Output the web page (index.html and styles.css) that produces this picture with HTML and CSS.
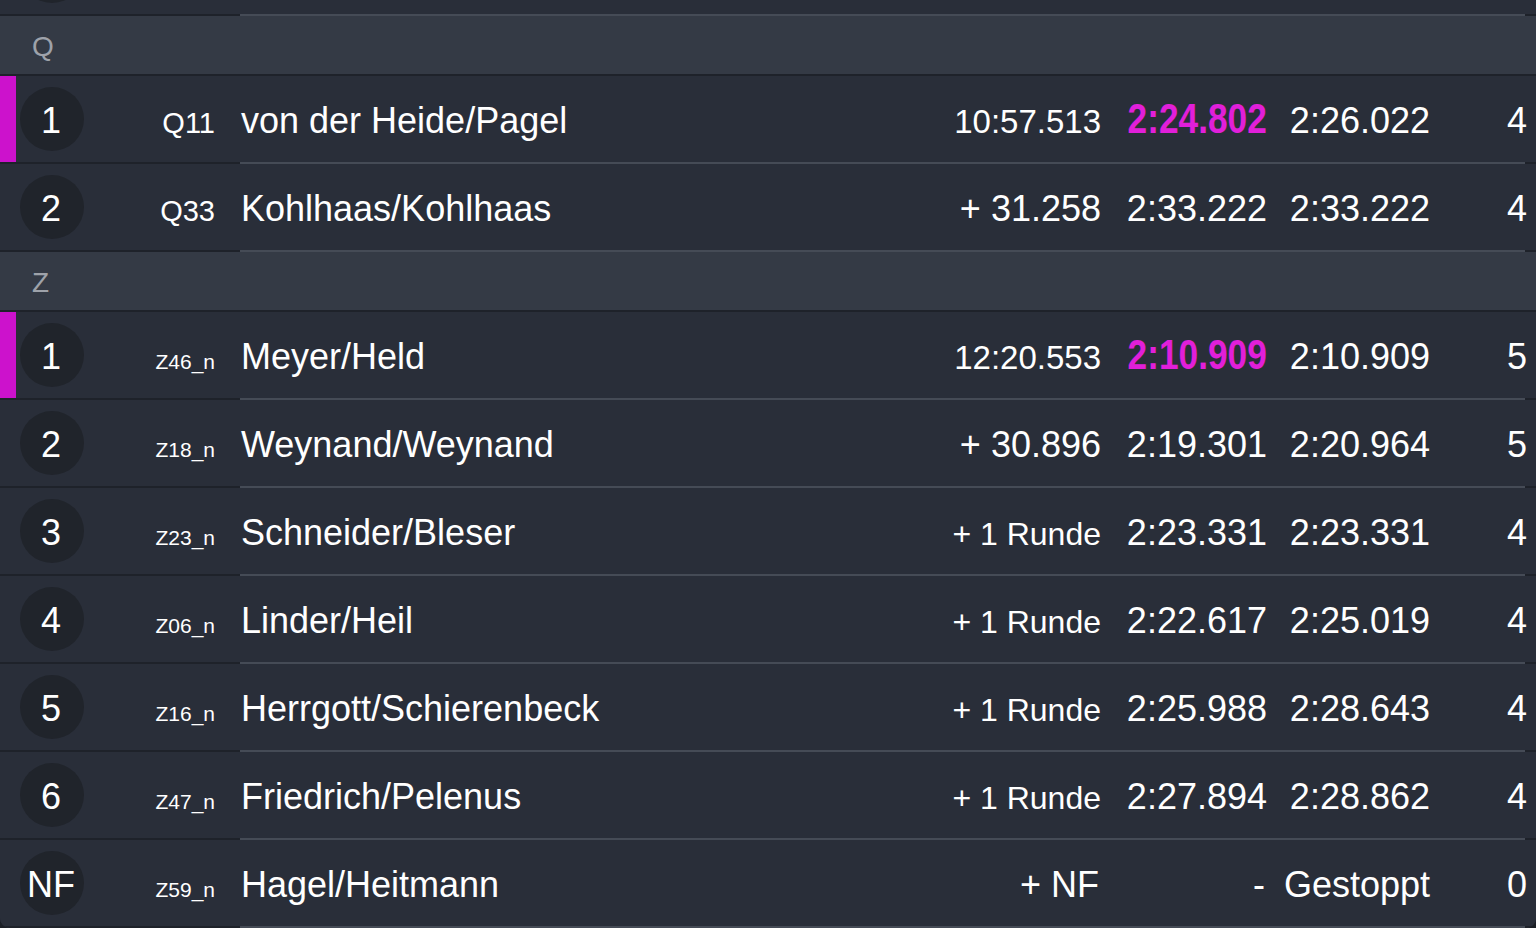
FILE: index.html
```html
<!DOCTYPE html>
<html lang="de">
<head>
<meta charset="utf-8">
<title>Ergebnisse</title>
<link rel="stylesheet" href="styles.css">
</head>
<body>
<div class="table">
  <div class="row">
    <div class="bar"></div>
    <div class="pos"></div>
    <div class="cols"></div>
  </div>

  <div class="group">Q</div>
  <div class="row">
    <div class="bar lead"></div>
    <div class="pos">1</div>
    <div class="cols">
      <div class="code">Q11</div>
      <div class="name">von der Heide/Pagel</div>
      <div class="t t1 fit">10:57.513</div>
      <div class="t t2"><span class="best">2:24.802</span></div>
      <div class="t t3">2:26.022</div>
      <div class="t laps">4</div>
    </div>
  </div>
  <div class="row">
    <div class="bar"></div>
    <div class="pos">2</div>
    <div class="cols">
      <div class="code">Q33</div>
      <div class="name">Kohlhaas/Kohlhaas</div>
      <div class="t t1">+ 31.258</div>
      <div class="t t2">2:33.222</div>
      <div class="t t3">2:33.222</div>
      <div class="t laps">4</div>
    </div>
  </div>

  <div class="group">Z</div>
  <div class="row">
    <div class="bar lead"></div>
    <div class="pos">1</div>
    <div class="cols">
      <div class="code small">Z46_n</div>
      <div class="name">Meyer/Held</div>
      <div class="t t1 fit">12:20.553</div>
      <div class="t t2"><span class="best">2:10.909</span></div>
      <div class="t t3">2:10.909</div>
      <div class="t laps">5</div>
    </div>
  </div>
  <div class="row">
    <div class="bar"></div>
    <div class="pos">2</div>
    <div class="cols">
      <div class="code small">Z18_n</div>
      <div class="name">Weynand/Weynand</div>
      <div class="t t1">+ 30.896</div>
      <div class="t t2">2:19.301</div>
      <div class="t t3">2:20.964</div>
      <div class="t laps">5</div>
    </div>
  </div>
  <div class="row">
    <div class="bar"></div>
    <div class="pos">3</div>
    <div class="cols">
      <div class="code small">Z23_n</div>
      <div class="name">Schneider/Bleser</div>
      <div class="t t1 lap">+ 1 Runde</div>
      <div class="t t2">2:23.331</div>
      <div class="t t3">2:23.331</div>
      <div class="t laps">4</div>
    </div>
  </div>
  <div class="row">
    <div class="bar"></div>
    <div class="pos">4</div>
    <div class="cols">
      <div class="code small">Z06_n</div>
      <div class="name">Linder/Heil</div>
      <div class="t t1 lap">+ 1 Runde</div>
      <div class="t t2">2:22.617</div>
      <div class="t t3">2:25.019</div>
      <div class="t laps">4</div>
    </div>
  </div>
  <div class="row">
    <div class="bar"></div>
    <div class="pos">5</div>
    <div class="cols">
      <div class="code small">Z16_n</div>
      <div class="name">Herrgott/Schierenbeck</div>
      <div class="t t1 lap">+ 1 Runde</div>
      <div class="t t2">2:25.988</div>
      <div class="t t3">2:28.643</div>
      <div class="t laps">4</div>
    </div>
  </div>
  <div class="row">
    <div class="bar"></div>
    <div class="pos">6</div>
    <div class="cols">
      <div class="code small">Z47_n</div>
      <div class="name">Friedrich/Pelenus</div>
      <div class="t t1 lap">+ 1 Runde</div>
      <div class="t t2">2:27.894</div>
      <div class="t t3">2:28.862</div>
      <div class="t laps">4</div>
    </div>
  </div>
  <div class="row">
    <div class="bar"></div>
    <div class="pos">NF</div>
    <div class="cols">
      <div class="code small">Z59_n</div>
      <div class="name">Hagel/Heitmann</div>
      <div class="t t1">+ NF</div>
      <div class="t t2 dash">-</div>
      <div class="t t3">Gestoppt</div>
      <div class="t laps">0</div>
    </div>
  </div>
</div>
</body>
</html>
```
FILE: styles.css
```css
html, body {
  margin: 0;
  padding: 0;
  background: #1b1f26;
  overflow: hidden;
}

body {
  width: 1536px;
  height: 928px;
  font-family: "Liberation Sans", Arial, sans-serif;
  color: #ffffff;
}

.table {
  margin-top: -72px;
  background: #292e39;
  border-radius: 0 0 10px 10px;
  overflow: hidden;
}

.group {
  height: 60px;
  box-sizing: border-box;
  padding: 15px 0 0 32px;
  background: #343a45;
  border-bottom: 2px solid #1e222a;
  color: #9ea2aa;
  font-size: 28px;
  line-height: 32px;
}

.row {
  display: flex;
  align-items: center;
  height: 88px;
  box-sizing: border-box;
  padding-bottom: 2px;
  background:
    linear-gradient(to right, #1e222a 0 240px, #454b56 240px 1525px, #1e222a 1525px) left bottom / 100% 2px no-repeat,
    #292e39;
}

.bar {
  width: 16px;
  align-self: stretch;
}

.bar.lead {
  background: #cc12cc;
}

.pos {
  width: 64px;
  height: 64px;
  margin-left: 4px;
  border-radius: 50%;
  background: #20242b;
  display: flex;
  align-items: center;
  justify-content: center;
  font-size: 36px;
  line-height: 1;
  padding: 3px 2px 0 0;
  box-sizing: border-box;
}

.cols {
  flex: 1;
  display: flex;
  align-items: baseline;
  padding-top: 4px;
}

.code {
  width: 131px;
  text-align: right;
  font-size: 29px;
}

.code.small {
  font-size: 21px;
}

.name {
  flex: 1;
  padding-left: 26px;
  font-size: 36px;
  white-space: nowrap;
}

.t {
  text-align: right;
  font-size: 36px;
  white-space: nowrap;
}

.t1 { width: 200px; }
.t2 { width: 166px; }
.t3 { width: 163px; }
.laps { width: 97px; margin-right: 9px; }

.t1.fit {
  font-size: 33px;
}

.t1.lap {
  font-size: 32px;
}

.t2.dash {
  padding-right: 2px;
}

.best {
  display: inline-block;
  color: #e11fd9;
  font-weight: 700;
  font-size: 42px;
  line-height: 36px;
  transform: scaleX(0.84);
  transform-origin: right center;
}
```
